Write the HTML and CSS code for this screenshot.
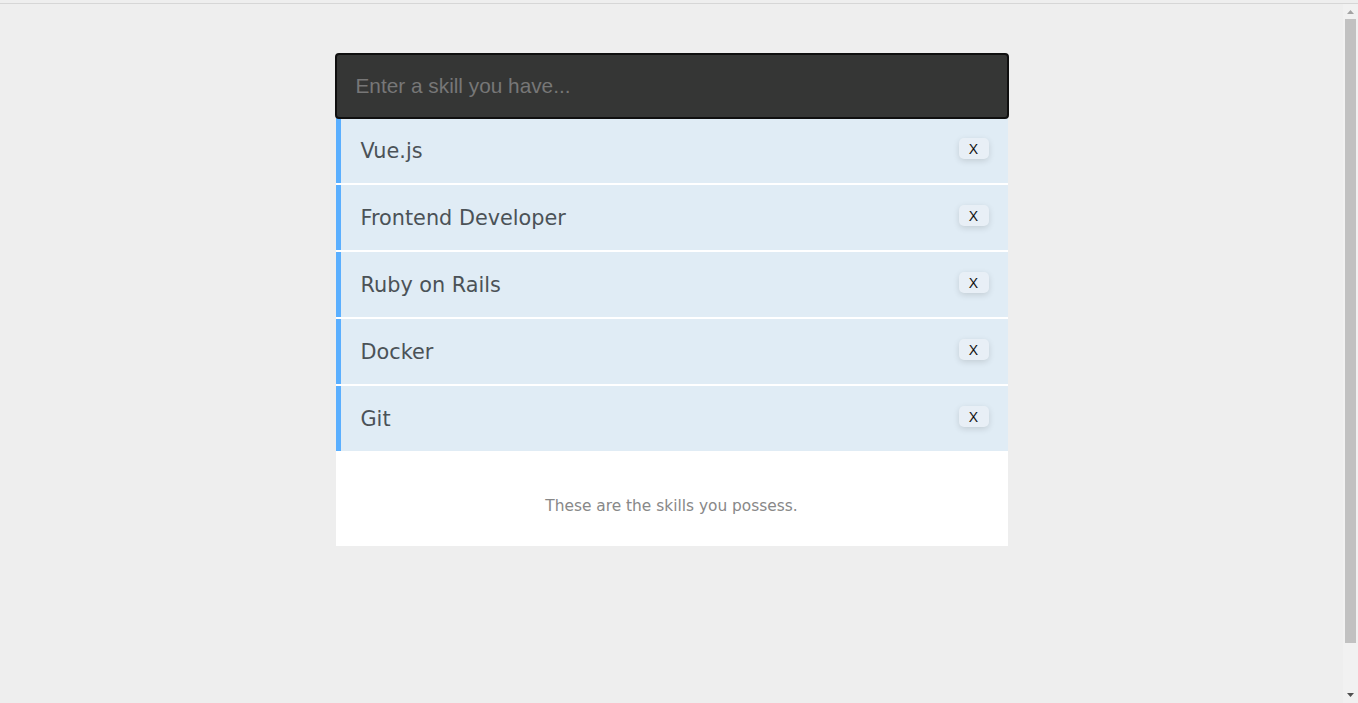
FILE: index.html
```html
<!DOCTYPE html>
<html lang="en">
<head>
<meta charset="utf-8">
<title>Skills</title>
<link rel="stylesheet" href="styles.css">
</head>
<body>
<div class="topline"></div>
<div class="page">
  <div class="app">
    <input class="skill-input" type="text" placeholder="Enter a skill you have...">
    <div class="panel">
      <ul class="skills">
        <li class="skill"><span class="skill-name">Vue.js</span><button class="remove">X</button></li>
        <li class="skill"><span class="skill-name">Frontend Developer</span><button class="remove">X</button></li>
        <li class="skill"><span class="skill-name">Ruby on Rails</span><button class="remove">X</button></li>
        <li class="skill"><span class="skill-name">Docker</span><button class="remove">X</button></li>
        <li class="skill"><span class="skill-name">Git</span><button class="remove">X</button></li>
      </ul>
      <p class="note">These are the skills you possess.</p>
    </div>
  </div>
</div>
<div class="scrollbar" aria-hidden="true">
  <div class="sb-arrow">
    <svg width="15" height="15" viewBox="0 0 15 15"><polygon points="4,10 11,10 7.5,6" fill="#a3a3a3"/></svg>
  </div>
  <div class="sb-thumb"></div>
  <div class="sb-space"></div>
  <div class="sb-arrow">
    <svg width="15" height="15" viewBox="0 0 15 15"><polygon points="4,5 11,5 7.5,9" fill="#505050"/></svg>
  </div>
</div>
</body>
</html>
```
FILE: styles.css
```css
html, body {
  margin: 0;
  padding: 0;
}
body {
  background: #eeeeee;
  font-family: "DejaVu Sans", "Open Sans", sans-serif;
  overflow: hidden;
}
.topline {
  margin-top: 3px;
  border-top: 1px solid #d6d6d6;
}
.page {
  margin-right: 15px;
  padding-bottom: 150px;
}
.app {
  width: 674px;
  margin: 49px auto 0;
}
.skill-input {
  display: block;
  box-sizing: border-box;
  width: 100%;
  height: 66px;
  margin: 0 0 -1px;
  padding: 0 19px;
  background: #353635;
  border: 2px solid #0f0f0f;
  border-radius: 4px;
  font-family: "Liberation Sans", Arial, sans-serif;
  font-size: 20.8px;
  color: #dddddd;
  outline: none;
  position: relative;
  z-index: 1;
}
.skill-input::placeholder {
  color: #777777;
}
.panel {
  margin: 0 1px;
  background: #ffffff;
}
.skills {
  list-style: none;
  margin: 0;
  padding: 0;
}
.skill {
  display: flex;
  align-items: center;
  justify-content: space-between;
  box-sizing: border-box;
  height: 65px;
  margin-bottom: 2px;
  padding: 0 19px 0 20px;
  background: #e0ecf5;
  border-left: 5px solid #5aafff;
}
.skill:last-child {
  margin-bottom: 0;
}
.skill-name {
  font-size: 20.8px;
  color: #4b5257;
}
.remove {
  width: 30px;
  height: 21px;
  margin-bottom: 4px;
  padding: 0;
  border: none;
  border-radius: 5px;
  background: #e8eff6;
  box-shadow: 0 2px 6px rgba(0, 0, 0, 0.13);
  font-family: "Liberation Sans", Arial, sans-serif;
  font-size: 14px;
  color: #111111;
}
.note {
  margin: 0;
  padding: 45px 0 30px;
  line-height: 20px;
  text-align: center;
  font-size: 15.4px;
  color: #888888;
}
.scrollbar {
  position: fixed;
  top: 4px;
  right: 0;
  bottom: 0;
  width: 15px;
  background: #f1f1f1;
  display: flex;
  flex-direction: column;
}
.sb-arrow {
  height: 15px;
  flex: none;
  display: flex;
}
.sb-thumb {
  height: 624px;
  margin: 0 2px;
  background: #c1c1c1;
  flex: none;
}
.sb-space {
  flex: 1;
}
```
